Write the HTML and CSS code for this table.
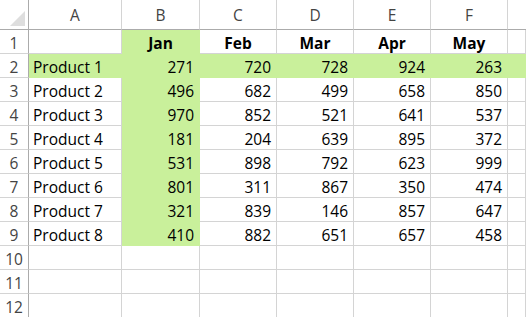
FILE: index.html
```html
<!DOCTYPE html>
<html>
<head>
<meta charset="utf-8">
<link rel="stylesheet" href="styles.css">
</head>
<body>
<div class="sheet">
  <div class="corner"><div class="tri"></div></div>
  <div class="ch">A</div><div class="ch">B</div><div class="ch">C</div><div class="ch">D</div><div class="ch">E</div><div class="ch">F</div><div class="ch last"></div>

  <div class="rh">1</div><div class="c"></div><div class="c b hd fill">Jan</div><div class="c hd">Feb</div><div class="c hd">Mar</div><div class="c hd">Apr</div><div class="c hd">May</div><div class="c"></div>

  <div class="rh">2</div><div class="c fill">Product 1</div><div class="c n fill">271</div><div class="c n fill">720</div><div class="c n fill">728</div><div class="c n fill">924</div><div class="c n fill">263</div><div class="c fill"></div>

  <div class="rh">3</div><div class="c">Product 2</div><div class="c n fill">496</div><div class="c n">682</div><div class="c n">499</div><div class="c n">658</div><div class="c n">850</div><div class="c"></div>

  <div class="rh">4</div><div class="c">Product 3</div><div class="c n fill">970</div><div class="c n">852</div><div class="c n">521</div><div class="c n">641</div><div class="c n">537</div><div class="c"></div>

  <div class="rh">5</div><div class="c">Product 4</div><div class="c n fill">181</div><div class="c n">204</div><div class="c n">639</div><div class="c n">895</div><div class="c n">372</div><div class="c"></div>

  <div class="rh">6</div><div class="c">Product 5</div><div class="c n fill">531</div><div class="c n">898</div><div class="c n">792</div><div class="c n">623</div><div class="c n">999</div><div class="c"></div>

  <div class="rh">7</div><div class="c">Product 6</div><div class="c n fill">801</div><div class="c n">311</div><div class="c n">867</div><div class="c n">350</div><div class="c n">474</div><div class="c"></div>

  <div class="rh">8</div><div class="c">Product 7</div><div class="c n fill">321</div><div class="c n">839</div><div class="c n">146</div><div class="c n">857</div><div class="c n">647</div><div class="c"></div>

  <div class="rh">9</div><div class="c">Product 8</div><div class="c n fill">410</div><div class="c n">882</div><div class="c n">651</div><div class="c n">657</div><div class="c n">458</div><div class="c"></div>

  <div class="rh">10</div><div class="c"></div><div class="c"></div><div class="c"></div><div class="c"></div><div class="c"></div><div class="c"></div><div class="c"></div>

  <div class="rh">11</div><div class="c"></div><div class="c"></div><div class="c"></div><div class="c"></div><div class="c"></div><div class="c"></div><div class="c"></div>

  <div class="rh">12</div><div class="c"></div><div class="c"></div><div class="c"></div><div class="c"></div><div class="c"></div><div class="c"></div><div class="c"></div>
</div>
</body>
</html>
```

FILE: styles.css
```css
html, body {
  margin: 0;
  padding: 0;
  background: #ffffff;
}

.sheet {
  display: grid;
  grid-template-columns: 29px 93px 78px 77px 77px 77px 77px 1fr;
  grid-template-rows: 30px repeat(12, 24px);
  width: 526px;
  height: 317px;
  overflow: hidden;
  font-family: "Open Sans", "Noto Sans", sans-serif;
  font-size: 15.5px;
  color: #000;
}

.sheet > div {
  box-sizing: border-box;
  border-right: 1px solid #d4d4d4;
  border-bottom: 1px solid #d4d4d4;
  white-space: nowrap;
  overflow: hidden;
}

.corner {
  position: relative;
  border-right-color: #ababab !important;
  border-bottom-color: #ababab !important;
}

.tri {
  position: absolute;
  left: 10px;
  top: 11px;
  width: 15px;
  height: 15px;
  background: #dedede;
  clip-path: polygon(100% 0, 100% 100%, 0 100%);
}

.ch {
  text-align: center;
  line-height: 30px;
  color: #444;
  border-bottom-color: #ababab !important;
}

.ch.last {
  border-right: none !important;
}

.rh {
  text-align: center;
  line-height: 24px;
  color: #444;
  border-right-color: #ababab !important;
  padding-top: 1px;
}

.c {
  line-height: 24px;
  padding: 1px 4px 0 4px;
}

.n {
  text-align: right;
  padding-right: 5px;
}

.hd {
  text-align: center;
  font-weight: bold;
}

.fill {
  background: #c9f09b;
  border-color: #c9f09b !important;
}
```
